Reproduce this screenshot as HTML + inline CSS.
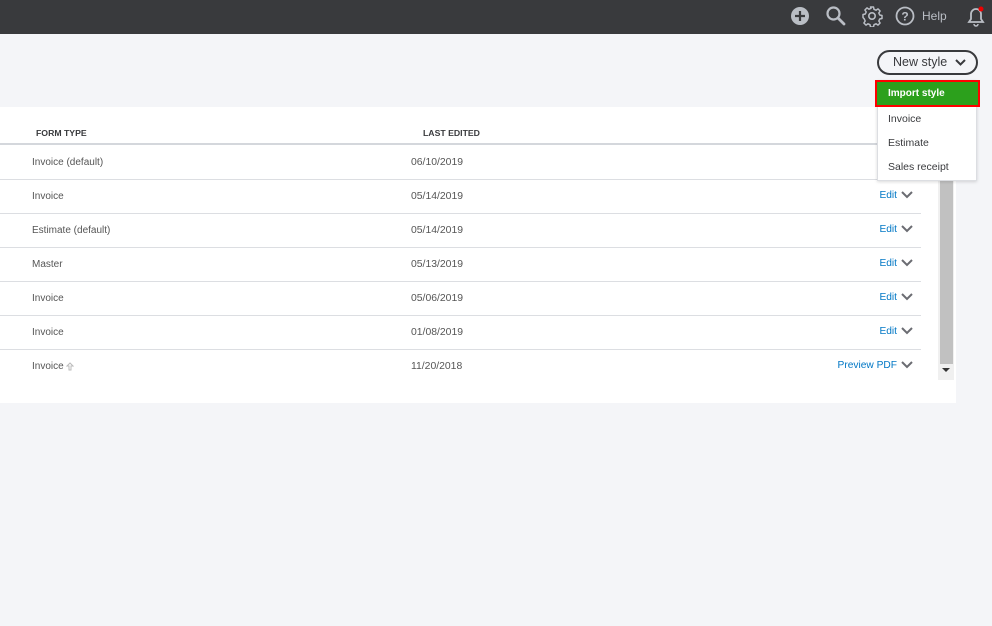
<!DOCTYPE html>
<html><head><style>
body{margin:0;width:992px;height:626px;background:#f4f5f8;font-family:"Liberation Sans",sans-serif;position:relative;overflow:hidden}
.top{position:absolute;left:0;top:0;width:992px;height:34px;background:#393a3d}
.panel{position:absolute;left:0;top:107px;width:956px;height:296px;background:#fff}
.hd{position:absolute;top:128px;font-size:8.7px;font-weight:bold;color:#393a3d}
.hl{position:absolute;left:0;top:143px;width:921px;height:2px;background:#d4d7dc}
.row{position:absolute;left:0;width:921px;height:34px;border-bottom:1px solid #dcdee2;font-size:10px;color:#555}
.row .a{position:absolute;left:32px;top:12px}
.row .b{position:absolute;left:411px;top:12px;font-size:10.4px}
.row .c{position:absolute;right:24px;top:11px;color:#0077c5;font-size:10.2px}
.row svg{position:absolute;right:8px;top:12px}
.sb{position:absolute;left:938px;top:180px;width:16px;height:200px;background:#f0f0f0}
.th{position:absolute;left:940px;top:180px;width:13px;height:184px;background:#c1c1c1}
.btn{position:absolute;left:877px;top:50px;width:101px;height:25px;border:2px solid #393a3d;border-radius:14px;box-sizing:border-box;font-size:12.5px;color:#393a3d;line-height:21px;padding-left:14px;background:#f4f5f8}
.dd{position:absolute;left:877px;top:80px;width:100px;height:101px;background:#fff;border:1px solid #dcdee2;box-shadow:0 1px 3px rgba(0,0,0,.15);box-sizing:border-box}
.dd div{position:absolute;left:10px;font-size:10.5px;color:#393a3d}
.imp{position:absolute;left:875px;top:80px;width:105px;height:27px;background:#2ca01c;border:2px solid #f00;box-sizing:border-box;color:#fff;font-weight:bold;font-size:10px;line-height:24px;padding-left:11px}
</style></head><body>
<div class="top">
<svg style="position:absolute;left:790px;top:6px" width="20" height="20"><circle cx="10" cy="10" r="9" fill="#babec5"/><path d="M10 5v10M5 10h10" stroke="#393a3d" stroke-width="2.2"/></svg>
<svg style="position:absolute;left:825px;top:5px" width="22" height="22"><circle cx="8.5" cy="8.5" r="6" fill="none" stroke="#babec5" stroke-width="2.2"/><path d="M13 13l6 6" stroke="#babec5" stroke-width="2.8" stroke-linecap="round"/></svg>
<svg style="position:absolute;left:861px;top:5px" width="22" height="22"><circle cx="11" cy="11" r="3.2" fill="none" stroke="#babec5" stroke-width="1.6"/><path d="M9.5 2h3l.5 2.3 2 .9 2-1.3 2.1 2.1-1.3 2 .9 2 2.3.5v3l-2.3.5-.9 2 1.3 2-2.1 2.1-2-1.3-2 .9-.5 2.3h-3l-.5-2.3-2-.9-2 1.3-2.1-2.1 1.3-2-.9-2L2 12.5v-3l2.3-.5.9-2-1.3-2L6 2.9l2 1.3 2-.9z" fill="none" stroke="#babec5" stroke-width="1.5" stroke-linejoin="round"/></svg>
<svg style="position:absolute;left:895px;top:6px" width="20" height="20"><circle cx="10" cy="10" r="8.5" fill="none" stroke="#babec5" stroke-width="1.8"/><text x="10" y="14.5" font-size="12" font-family="Liberation Sans" font-weight="bold" fill="#babec5" text-anchor="middle">?</text></svg>
<span style="position:absolute;left:922px;top:9px;font-size:12px;color:#babec5">Help</span>
<svg style="position:absolute;left:965px;top:5px" width="22" height="22"><path d="M4 17h14l-2-3v-5a5 5 0 0 0-10 0v5z" fill="none" stroke="#babec5" stroke-width="1.8"/><path d="M9 19a2 2 0 0 0 4 0" fill="none" stroke="#babec5" stroke-width="1.5"/><circle cx="16" cy="4" r="2.5" fill="#e00"/></svg>
</div>
<div class="btn">New style<svg style="position:absolute;right:10px;top:7px" width="11" height="8"><path d="M1 1l4.5 4.5L10 1" fill="none" stroke="#393a3d" stroke-width="2"/></svg></div>
<div class="panel"></div>
<div class="hd" style="left:36px">FORM TYPE</div>
<div class="hd" style="left:423px">LAST EDITED</div>
<div class="hl"></div>
<div class="row" style="top:145px"><span class="a">Invoice (default)</span><span class="b">06/10/2019</span></div>
<div class="row" style="top:179px"><span class="a">Invoice</span><span class="b">05/14/2019</span><span class="c">Edit</span><svg width="12" height="8"><path d="M1 1l5 5 5-5" fill="none" stroke="#6b6c72" stroke-width="2"/></svg></div>
<div class="row" style="top:213px"><span class="a">Estimate (default)</span><span class="b">05/14/2019</span><span class="c">Edit</span><svg width="12" height="8"><path d="M1 1l5 5 5-5" fill="none" stroke="#6b6c72" stroke-width="2"/></svg></div>
<div class="row" style="top:247px"><span class="a">Master</span><span class="b">05/13/2019</span><span class="c">Edit</span><svg width="12" height="8"><path d="M1 1l5 5 5-5" fill="none" stroke="#6b6c72" stroke-width="2"/></svg></div>
<div class="row" style="top:281px"><span class="a">Invoice</span><span class="b">05/06/2019</span><span class="c">Edit</span><svg width="12" height="8"><path d="M1 1l5 5 5-5" fill="none" stroke="#6b6c72" stroke-width="2"/></svg></div>
<div class="row" style="top:315px"><span class="a">Invoice</span><span class="b">01/08/2019</span><span class="c">Edit</span><svg width="12" height="8"><path d="M1 1l5 5 5-5" fill="none" stroke="#6b6c72" stroke-width="2"/></svg></div>
<div class="row" style="top:349px;border-bottom:none"><span class="a">Invoice</span><svg style="position:absolute;left:66px;top:13px" width="8" height="9"><path d="M4 1L1 4h2v4h2V4h2z" fill="none" stroke="#bbb" stroke-width="1"/></svg><span class="b">11/20/2018</span><span class="c">Preview PDF</span><svg width="12" height="8"><path d="M1 1l5 5 5-5" fill="none" stroke="#6b6c72" stroke-width="2"/></svg></div>
<div class="sb"></div><div class="th"></div>
<svg style="position:absolute;left:942px;top:368px" width="8" height="5"><path d="M0 0h8L4 4z" fill="#333"/></svg>
<div class="dd"><div style="top:32px">Invoice</div><div style="top:56px">Estimate</div><div style="top:80px">Sales receipt</div></div>
<div class="imp">Import style</div>
</body></html>
